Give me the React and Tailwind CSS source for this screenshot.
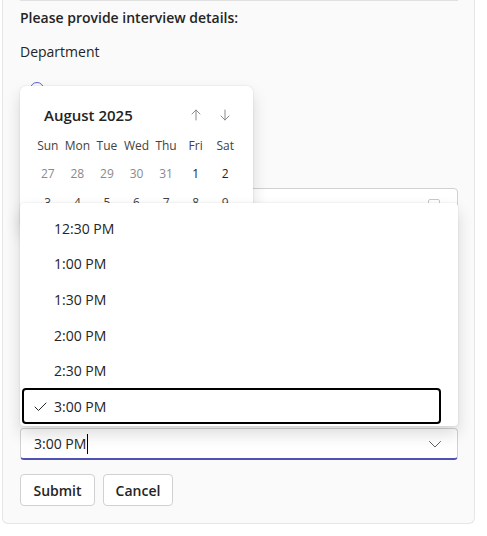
import React from "react";

const times = ["12:30 PM", "1:00 PM", "1:30 PM", "2:00 PM", "2:30 PM", "3:00 PM"];
const days = ["Sun", "Mon", "Tue", "Wed", "Thu", "Fri", "Sat"];
const firstRow = [
    { d: 27, muted: true },
    { d: 28, muted: true },
    { d: 29, muted: true },
    { d: 30, muted: true },
    { d: 31, muted: true },
    { d: 1 },
    { d: 2 },
];

function Arrow({ down }) {
    return (
        <svg width="12" height="12" viewBox="0 0 12 12" fill="none" stroke="#8a8a8a" strokeWidth="1" strokeLinecap="round" strokeLinejoin="round">
            {down ? (
                <path d="M6 1v10M2 7l4 4 4-4" />
            ) : (
                <path d="M6 11V1M2 5l4-4 4 4" />
            )}
        </svg>
    );
}

function App() {
    return (
        <div className="min-h-[536px] bg-white font-['Segoe_UI','Open_Sans',sans-serif] text-[#242424]">
            <div className="relative mx-[2px] w-[473px] rounded-b-md border border-t-0 border-[#e6e6e6] bg-[#fafafa] pl-[17px] pr-[16px] pb-[17px]">
                <div className="h-px bg-[#e0e0e0]" />
                <p className="mt-[7px] text-[14px] leading-5 font-semibold">Please provide interview details:</p>
                <p className="mt-[14px] text-[14px] leading-5">Department</p>

                {/* radio group (mostly under the calendar) */}
                <div className="mt-[17px] flex flex-col gap-2 pl-[10px]">
                    {["Engineering", "Design", "Sales"].map((r) => (
                        <label key={r} className="flex h-5 items-start gap-2 text-[14px] leading-5">
                            <span className="mt-[3px] h-[14px] w-[14px] shrink-0 rounded-full border border-[#5b5fc7]" />
                            <span className="mt-[6px]">{r}</span>
                        </label>
                    ))}
                </div>

                {/* date field */}
                <div className="mt-[33px] flex h-8 items-center justify-between rounded border border-[#d1d1d1] bg-white pl-3 pr-[17px] text-[14px]">
                    <span className="text-[#707070]">Select a date</span>
                    <svg width="12" height="12" viewBox="0 0 12 12" fill="none" stroke="#c8c8c8">
                        <rect x="0.5" y="1.5" width="11" height="10" rx="1.5" />
                    </svg>
                </div>

                <div className="h-[208px]" />

                {/* time combobox */}
                <div className="flex h-8 items-center justify-between rounded border border-[#d1d1d1] border-b-2 border-b-[#4f52b2] bg-white pl-[13px] pr-[15px] text-[14px]">
                    <span className="flex items-center">
                        3:00 PM
                        <span className="ml-px inline-block h-[20px] w-px bg-black" />
                    </span>
                    <svg width="14" height="14" viewBox="0 0 14 14" fill="none" stroke="#616161" strokeWidth="1" strokeLinecap="round" strokeLinejoin="round">
                        <path d="M1.5 4.5L7 10l5.5-5.5" />
                    </svg>
                </div>

                <div className="mt-[14px] flex gap-2">
                    <button className="h-8 w-[75px] rounded border border-[#d1d1d1] bg-white text-[14px] font-semibold">Submit</button>
                    <button className="h-8 w-[70px] rounded border border-[#d1d1d1] bg-white text-[14px] font-semibold">Cancel</button>
                </div>

                {/* calendar popup */}
                <div className="absolute left-[17px] top-[86px] w-[233px] rounded-md bg-white px-[13px] pt-[17px] pb-3 shadow-[0_0_2px_rgba(0,0,0,0.12),0_8px_16px_rgba(0,0,0,0.14)]">
                    <div className="flex items-center">
                        <span className="ml-[11px] flex-1 text-[15px] leading-6 font-semibold">August 2025</span>
                        <span className="flex w-[29.5px] justify-center"><Arrow /></span>
                        <span className="flex w-[29.5px] justify-center"><Arrow down /></span>
                    </div>
                    <div className="mt-[5px] grid grid-cols-7 text-[12px] text-[#424242]">
                        {days.map((d) => (
                            <div key={d} className="flex h-[27px] items-center justify-center">{d}</div>
                        ))}
                        {firstRow.map((c) => (
                            <div key={c.d} className={`flex h-[29px] items-center justify-center ${c.muted ? "text-[#8a8a8a]" : "text-[#242424]"}`}>{c.d}</div>
                        ))}
                        {[3, 4, 5, 6, 7, 8, 9].map((d) => (
                            <div key={d} className="flex h-[29px] items-center justify-center">{d}</div>
                        ))}
                    </div>
                </div>

                {/* time listbox */}
                <div className="absolute left-[17px] top-[203px] h-[223px] w-[438px] overflow-hidden rounded bg-white pt-[7.5px] shadow-[0_0_2px_rgba(0,0,0,0.12),0_8px_16px_rgba(0,0,0,0.14)]">
                    {times.map((t) => {
                        const selected = t === "3:00 PM";
                        return (
                            <div
                                key={t}
                                className={`ml-[2px] mr-[17px] flex h-[35.6px] items-center rounded text-[14px] ${selected ? "border-2 border-black" : ""}`}
                            >
                                <span className={`flex w-[32px] justify-center ${selected ? "pl-[1px]" : ""}`}>
                                    {selected && (
                                        <svg width="13" height="13" viewBox="0 0 13 13" fill="none" stroke="#242424" strokeWidth="1" strokeLinecap="round" strokeLinejoin="round">
                                            <path d="M1 7l3.5 3.5L12 3" />
                                        </svg>
                                    )}
                                </span>
                                <span className={selected ? "-ml-[2px]" : ""}>{t}</span>
                            </div>
                        );
                    })}
                </div>
            </div>
        </div>
    );
}

export default App;
